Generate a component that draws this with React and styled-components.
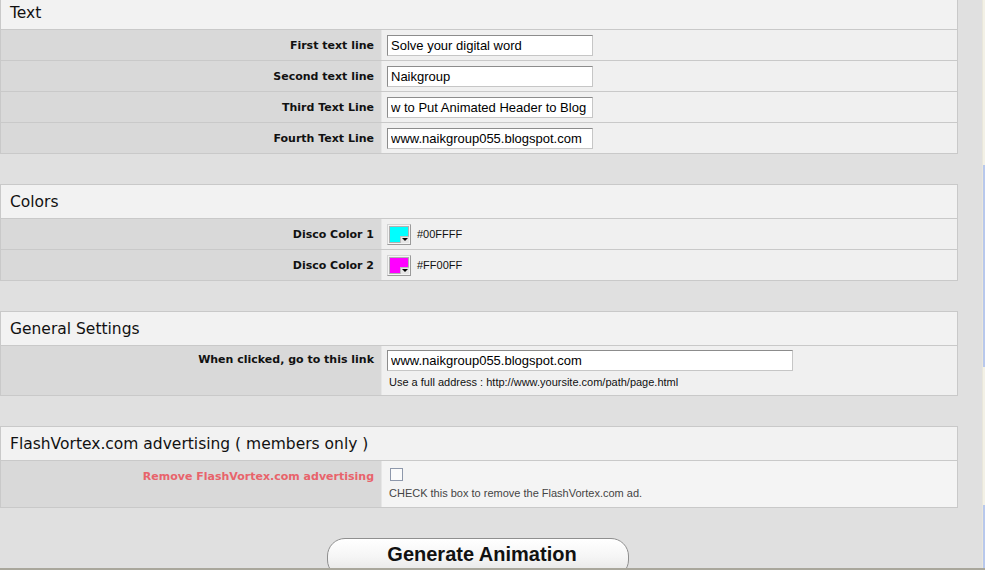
import React from "react";
import styled, { createGlobalStyle } from "styled-components";

const Global = createGlobalStyle`
  html, body { margin: 0; padding: 0; background: #e0e0e0; overflow: hidden; }
  body { width: 985px; height: 570px; font-family: "DejaVu Sans", Verdana, sans-serif; }
`;

const Frame = styled.div`
  display: flex;
  width: 985px;
  height: 570px;
  overflow: hidden;
`;

const Main = styled.div`
  width: 982px;
  display: flex;
  flex-direction: column;
  gap: 30px;
  margin-top: -5px;
`;

const ScrollStrip = styled.div`
  width: 3px;
  height: 570px;
  background: linear-gradient(
    to bottom,
    #f3f1e6 0px, #f3f1e6 165px,
    #b8c8ec 165px, #b8c8ec 367px,
    #f3f1e6 367px, #f3f1e6 505px,
    #b8c8ec 505px, #b8c8ec 570px
  );
  border-left: 1px solid #e9e7dc;
  box-sizing: border-box;
`;

const BottomEdge = styled.div`
  position: fixed;
  left: 0;
  bottom: 0;
  width: 985px;
  height: 2px;
  background: #a9a79c;
`;

const Section = styled.div`
  width: 958px;
  box-sizing: border-box;
  border: 1px solid #c9c9c9;
  background: #f0f0f0;
`;

const Header = styled.div`
  height: 33px;
  display: flex;
  align-items: center;
  padding-left: 9px;
  background: #f2f2f2;
  font-family: "DejaVu Sans", Verdana, sans-serif;
  font-size: 15.5px;
  color: #111;
  border-bottom: 1px solid #c9c9c9;
`;

const Row = styled.div`
  display: grid;
  grid-template-columns: 381px 1fr;
  min-height: ${(p) => p.$h || 30}px;
  border-bottom: 1px solid #c9c9c9;
  &:last-child { border-bottom: none; }
`;

const Label = styled.div`
  background: #d9d9d9;
  border-right: 1px solid #e6e6e6;
  display: flex;
  justify-content: flex-end;
  align-items: ${(p) => (p.$top ? "flex-start" : "center")};
  padding-right: 7px;
  padding-top: ${(p) => (p.$top ? p.$top : 0)}px;
  font-family: "DejaVu Sans", Verdana, sans-serif;
  font-weight: bold;
  font-size: 11px;
  color: ${(p) => (p.$red ? "#e8636b" : "#111")};
`;

const Value = styled.div`
  background: ${(p) => p.$bg || "#f0f0f0"};
  display: flex;
  flex-direction: ${(p) => (p.$col ? "column" : "row")};
  align-items: ${(p) => (p.$col ? "flex-start" : "center")};
  padding-left: 5px;
  padding-top: ${(p) => p.$pt || 0}px;
  gap: ${(p) => p.$gap || 0}px;
`;

const TextInput = styled.input`
  box-sizing: border-box;
  width: ${(p) => p.$w || 206}px;
  height: 21px;
  border: 1px solid #c6c6c6;
  border-top-color: #8c8c8c;
  border-left-color: #8c8c8c;
  background: #fff;
  padding: 0 3px;
  font-family: "Liberation Sans", Arial, sans-serif;
  font-size: 13px;
  color: #000;
  outline: none;
  margin: 0;
`;

const Swatch = styled.div`
  position: relative;
  box-sizing: border-box;
  width: 24px;
  height: 21px;
  border: 1px solid #9a9a9a;
  border-top-color: #d4d4d4;
  border-left-color: #d4d4d4;
  background: #f4f4f4;
  padding: 1px;
  margin-right: 6px;
`;

const SwatchFill = styled.div`
  width: 20px;
  height: 17px;
  background: ${(p) => p.$c};
  border: 1px solid #b0b0b0;
  box-sizing: border-box;
`;

const SwatchArrow = styled.div`
  position: absolute;
  right: 1px;
  bottom: 1px;
  width: 9px;
  height: 7px;
  background: #e6e6e6;
  border-top: 1px solid #bdbdbd;
  border-left: 1px solid #bdbdbd;
  box-sizing: border-box;
  display: flex;
  align-items: center;
  justify-content: center;
  &::after {
    content: "";
    border-left: 3px solid transparent;
    border-right: 3px solid transparent;
    border-top: 3px solid #000;
  }
`;

const HexText = styled.span`
  font-family: "Liberation Sans", Arial, sans-serif;
  font-size: 11px;
  color: #111;
`;

const Hint = styled.div`
  font-family: "Liberation Sans", Arial, sans-serif;
  font-size: 11px;
  color: ${(p) => p.$c || "#111"};
  padding-left: 2px;
`;

const Check = styled.div`
  width: 13px;
  height: 13px;
  box-sizing: border-box;
  border: 1px solid #8e98ab;
  background: #fbfbfb;
  margin-left: 3px;
`;

const ButtonRow = styled.div`
  width: 958px;
  display: flex;
  justify-content: center;
`;

const GenButton = styled.button`
  width: 302px;
  height: 40px;
  margin-left: -3px;
  border: 1px solid #8f8f8f;
  border-radius: 18px;
  background: linear-gradient(to bottom, #ffffff 0%, #f6f6f6 45%, #e2e2e2 100%);
  font-family: "Liberation Sans", Arial, sans-serif;
  font-weight: bold;
  font-size: 20px;
  color: #111;
  display: flex;
  justify-content: center;
  padding: 4px 0 0 9px;
  align-items: flex-start;
  box-shadow: inset 0 1px 0 #fff;
`;

function Color({ c, hex }) {
  return (
    <>
      <Swatch>
        <SwatchFill $c={c} />
        <SwatchArrow />
      </Swatch>
      <HexText>{hex}</HexText>
    </>
  );
}

export default function App() {
  return (
    <Frame>
      <Global />
      <Main>
        <Section>
          <Header>Text</Header>
          <Row>
            <Label>First text line</Label>
            <Value><TextInput defaultValue="Solve your digital word" /></Value>
          </Row>
          <Row>
            <Label>Second text line</Label>
            <Value><TextInput defaultValue="Naikgroup" /></Value>
          </Row>
          <Row>
            <Label>Third Text Line</Label>
            <Value><TextInput defaultValue="w to Put Animated Header to Blog" /></Value>
          </Row>
          <Row>
            <Label>Fourth Text Line</Label>
            <Value><TextInput defaultValue="www.naikgroup055.blogspot.com" /></Value>
          </Row>
        </Section>

        <Section>
          <Header>Colors</Header>
          <Row>
            <Label>Disco Color 1</Label>
            <Value><Color c="#00ffff" hex="#00FFFF" /></Value>
          </Row>
          <Row>
            <Label>Disco Color 2</Label>
            <Value><Color c="#ff00ff" hex="#FF00FF" /></Value>
          </Row>
        </Section>

        <Section>
          <Header>General Settings</Header>
          <Row $h={49}>
            <Label $top={7}>When clicked, go to this link</Label>
            <Value $col $pt={4} $gap={5}>
              <TextInput $w={406} defaultValue="www.naikgroup055.blogspot.com" />
              <Hint>Use a full address : http://www.yoursite.com/path/page.html</Hint>
            </Value>
          </Row>
        </Section>

        <Section>
          <Header>FlashVortex.com advertising ( members only )</Header>
          <Row $h={46}>
            <Label $top={9} $red>Remove FlashVortex.com advertising</Label>
            <Value $col $pt={7} $gap={6} $bg="#f4f4f4">
              <Check />
              <Hint $c="#444">CHECK this box to remove the FlashVortex.com ad.</Hint>
            </Value>
          </Row>
        </Section>

        <ButtonRow>
          <GenButton>Generate Animation</GenButton>
        </ButtonRow>
      </Main>
      <ScrollStrip />
      <BottomEdge />
    </Frame>
  );
}
